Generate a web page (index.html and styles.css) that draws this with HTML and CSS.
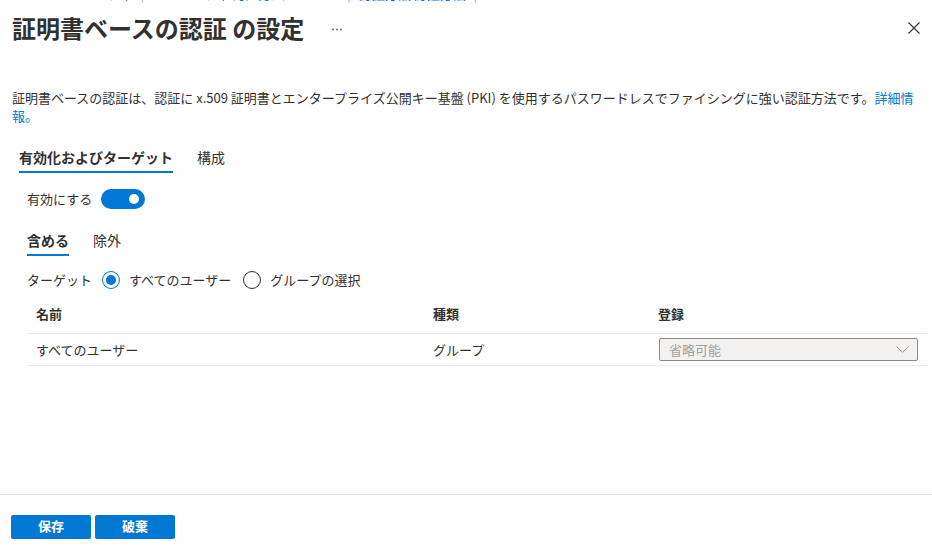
FILE: index.html
```html
<!DOCTYPE html>
<html lang="ja">
<head>
<meta charset="utf-8">
<title>証明書ベースの認証 の設定</title>
<link rel="stylesheet" href="styles.css">
</head>
<body>
<div class="page">
  <div class="crumbs">
    <div class="crumbs-line">
      <span class="crumb">ホーム セキュリティ</span><span class="sep">|</span><span class="crumb">セキュリティ 認証方法 ポリシー</span><span class="sep">|</span><span class="crumb strong">認証方法 認証方法</span><span class="sep">|</span><span class="crumb">ポリシー</span>
    </div>
  </div>
  <header class="header">
    <h1 class="title">証明書ベースの認証 の設定</h1>
    <span class="more" aria-label="その他">
      <svg width="10" height="3" viewBox="0 0 10 3"><circle cx="1" cy="1.5" r="0.9" fill="#605e5c"/><circle cx="5" cy="1.5" r="0.9" fill="#605e5c"/><circle cx="9" cy="1.5" r="0.9" fill="#605e5c"/></svg>
    </span>
    <span class="close" aria-label="閉じる">
      <svg width="12" height="12" viewBox="0 0 12 12"><path d="M0.5 0.5 L11.5 11.5 M11.5 0.5 L0.5 11.5" stroke="#323130" stroke-width="1.1" fill="none"/></svg>
    </span>
  </header>

  <main class="content">
    <p class="desc">証明書ベースの認証は、認証に x.509 証明書とエンタープライズ公開キー基盤 (PKI) を使用するパスワードレスでファイシングに強い認証方法です。<a class="link" href="#">詳細情報。</a></p>

    <nav class="tabs">
      <span class="tab active">有効化およびターゲット</span>
      <span class="tab">構成</span>
    </nav>

    <div class="toggle-row">
      <span class="label">有効にする</span>
      <span class="toggle"><span class="knob"></span></span>
    </div>

    <nav class="tabs sub">
      <span class="tab active">含める</span>
      <span class="tab">除外</span>
    </nav>

    <div class="target-row">
      <span class="label">ターゲット</span>
      <span class="radio checked"><span class="dot"></span></span>
      <span class="radio-label">すべてのユーザー</span>
      <span class="radio"></span>
      <span class="radio-label">グループの選択</span>
    </div>

    <div class="table">
      <div class="row head">
        <div class="cell">名前</div>
        <div class="cell">種類</div>
        <div class="cell">登録</div>
      </div>
      <div class="row">
        <div class="cell">すべてのユーザー</div>
        <div class="cell">グループ</div>
        <div class="cell">
          <div class="dropdown">
            <span>省略可能</span>
            <svg width="13" height="7" viewBox="0 0 13 7"><polyline points="0.5,0.5 6.5,6.5 12.5,0.5" stroke="#a19f9d" stroke-width="1" fill="none"/></svg>
          </div>
        </div>
      </div>
    </div>
  </main>

  <footer class="footer">
    <button class="btn">保存</button>
    <button class="btn">破棄</button>
  </footer>
</div>
</body>
</html>
```

FILE: styles.css
```css
* { box-sizing: border-box; }

html, body {
  margin: 0;
  padding: 0;
  background: #ffffff;
}

body {
  font-family: "Noto Sans CJK JP", "Noto Sans", sans-serif;
  color: #323130;
  font-size: 13px;
}

.page {
  height: 100vh;
  display: flex;
  flex-direction: column;
}

.crumbs {
  height: 3px;
  overflow: hidden;
  padding-left: 10px;
}

.crumbs-line {
  margin-top: -15px;
  font-size: 13px;
  line-height: 18px;
  white-space: nowrap;
  color: #0078d4;
}

.crumb { margin: 0 4px; }
.crumb.strong { font-weight: 600; }
.sep { color: #a19f9d; margin: 0 4px; }

.header {
  display: flex;
  align-items: center;
  padding: 5px 0 0 12px;
  height: 45px;
}

.title {
  margin: 0;
  font-size: 24px;
  line-height: 40px;
  font-weight: 600;
}

.more {
  display: flex;
  margin-left: 28px;
  margin-top: 2px;
}

.close {
  display: flex;
  margin-left: auto;
  margin-right: 12px;
}

.content {
  flex: 1;
}

.desc {
  margin: 41px 0 0;
  padding: 0 12px;
  font-size: 13px;
  line-height: 18px;
}

.link {
  color: #0078d4;
  text-decoration: none;
}

.tabs {
  display: flex;
  gap: 24px;
  margin: 22px 0 0 19px;
}

.tab {
  font-size: 14px;
  line-height: 20px;
  padding-bottom: 4px;
  border-bottom: 2px solid transparent;
}

.tab.active {
  font-weight: 600;
  border-bottom-color: #0078d4;
}

.tabs.sub {
  margin: 21px 0 0 27px;
}

.toggle-row {
  display: flex;
  align-items: center;
  gap: 9px;
  margin: 16px 0 0 27px;
  height: 20px;
}

.label {
  font-size: 13px;
  line-height: 20px;
}

.toggle {
  width: 44px;
  height: 20px;
  border-radius: 10px;
  background: #0078d4;
  display: flex;
  align-items: center;
  justify-content: flex-end;
  padding-right: 6px;
}

.knob {
  width: 10px;
  height: 10px;
  border-radius: 50%;
  background: #ffffff;
}

.target-row {
  display: flex;
  align-items: center;
  margin: 14px 0 0 27px;
  height: 20px;
}

.radio {
  width: 18px;
  height: 18px;
  border-radius: 50%;
  border: 1px solid #323130;
  display: flex;
  align-items: center;
  justify-content: center;
  margin-left: 12px;
}

.target-row .label + .radio { margin-left: 10px; }

.radio.checked { border-color: #0078d4; }

.dot {
  width: 10px;
  height: 10px;
  border-radius: 50%;
  background: #0078d4;
}

.radio-label {
  margin-left: 9px;
  font-size: 13px;
  line-height: 20px;
}

.table {
  margin: 9px 5px 0 27px;
}

.row {
  display: grid;
  grid-template-columns: 397px 225px 1fr;
  align-items: center;
  border-bottom: 1px solid #edebe9;
  height: 32px;
}

.row.head {
  height: 35px;
  align-items: start;
  padding-top: 5px;
}

.cell {
  padding: 0 9px;
  font-size: 13px;
  line-height: 20px;
}

.head .cell { font-weight: 600; }

.dropdown {
  height: 23px;
  background: #f3f2f1;
  border: 1px solid #8a8886;
  border-radius: 2px;
  display: flex;
  align-items: center;
  justify-content: space-between;
  padding: 0 8px 0 9px;
  color: #a19f9d;
  font-size: 13px;
  margin-left: 1px;
}

.footer {
  border-top: 1px solid #e1dfdd;
  padding: 20px 11px 18px;
  display: flex;
  gap: 4px;
}

.btn {
  width: 80px;
  height: 24px;
  border: none;
  border-radius: 2px;
  background: #0078d4;
  color: #ffffff;
  font-family: "Noto Sans CJK JP", "Noto Sans", sans-serif;
  font-size: 13px;
  line-height: 22px;
  font-weight: 600;
  padding: 0 0 2px;
}
```
